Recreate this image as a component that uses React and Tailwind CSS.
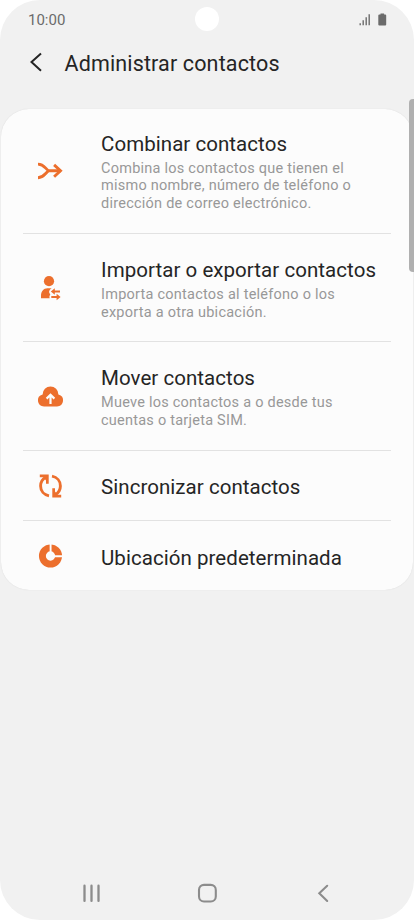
function MergeIcon() {
  return (
    <svg className="size-[30px]" viewBox="0 0 30 30" fill="none" stroke="currentColor" strokeWidth="2.900">
      <path d="M2 7.100C7.500 7.100 8.500 10.400 12.400 13.800C8.500 17.300 7.500 20.700 2 20.700M11.500 13.800H25" />
      <path d="M18.100 7.900 24.500 13.800 18.100 19.800" />
    </svg>
  )
}

function ImportExportIcon() {
  return (
    <svg className="size-[30px]" viewBox="0 0 30 30" fill="currentColor">
      <circle cx="13" cy="8.200" r="5.100" />
      <path d="M5 25.200v-2.500C5 18.200 7.500 15.400 11.500 15.200h4.200c-1.700 1-2.600 2.300-2.600 3.600 0 1 .7 2 1.200 2.700-1 1.200-1 2.500-.6 3.700z" />
      <path d="M14.800 18.500l4-3.200v2.200H24v2h-5.200v2.200zM24.600 24l-4-3.200V23h-5.300v2h5.300v2.200z" />
    </svg>
  )
}

function CloudUploadIcon() {
  return (
    <svg className="size-[30px]" viewBox="0 0 30 30">
      <path
        fill="currentColor"
        d="M8 24.600A6.200 6.200 0 0 1 6.600 12.400a7.900 7.900 0 0 1 15.800 0 6.200 6.200 0 0 1-1.400 12.200z"
      />
      <path d="M14.500 22V13M10.600 16.600l3.900-3.900 3.900 3.900" fill="none" stroke="#fcfcfc" strokeWidth="2.200" />
    </svg>
  )
}

function SyncIcon() {
  return (
    <svg className="size-[30px]" viewBox="0 0 30 30">
      <path
        d="M10 6C6.500 8 4.600 11 4.600 15c0 5 3.300 8.800 8.400 9.800M19 24c3.500-2 5.400-5 5.400-9 0-5-3.300-8.800-8.400-9.800"
        fill="none"
        stroke="currentColor"
        strokeWidth="2.900"
      />
      <path d="M3.800 3.500h8.900v9.200H10V9.500L7.500 6.300H3.800zM25.200 26.500h-8.900v-9.200H19v3.200l2.500 3.200h3.700z" fill="currentColor" />
    </svg>
  )
}

function StorageIcon() {
  return (
    <svg className="size-[30px]" viewBox="0 0 30 30">
      <circle cx="14.500" cy="15" r="8.100" fill="none" stroke="currentColor" strokeWidth="6.900" />
      <path d="M14.600 3v9M17 15.300h9.500" stroke="#fcfcfc" strokeWidth="1.900" />
    </svg>
  )
}

const items = [
  {
    title: 'Combinar contactos',
    lines: [
      'Combina los contactos que tienen el',
      'mismo nombre, número de teléfono o',
      'dirección de correo electrónico.',
    ],
    icon: MergeIcon,
    height: 'h-[125px]',
    offset: '',
  },
  {
    title: 'Importar o exportar contactos',
    lines: ['Importa contactos al teléfono o los', 'exporta a otra ubicación.'],
    icon: ImportExportIcon,
    height: 'h-[108px]',
    offset: 'pt-[2px]',
  },
  {
    title: 'Mover contactos',
    lines: ['Mueve los contactos a o desde tus', 'cuentas o tarjeta SIM.'],
    icon: CloudUploadIcon,
    height: 'h-[109px]',
    offset: 'pt-px',
  },
  { title: 'Sincronizar contactos', lines: [], icon: SyncIcon, height: 'h-[70px]', offset: 'pt-px' },
  { title: 'Ubicación predeterminada', lines: [], icon: StorageIcon, height: 'h-[69px]', offset: 'pt-[4px]' },
]

function StatusBar() {
  return (
    <div className="relative flex h-[38px] items-center justify-between pl-[28px] pr-[27px] text-[#6b6b6b]">
      <span className="pt-[2px] text-[15px] leading-[18px]">10:00</span>
      <div className="absolute left-[195px] top-[7px] size-[24px] rounded-full bg-white" />
      <div className="flex items-end gap-[7px]">
        <svg className="h-[13px] w-[12px]" viewBox="0 0 12 13" fill="currentColor">
          <path d="M.5 10.200h1.400v2H.5zM3.500 7.200h1.400v5H3.500zM6.500 4.200h1.400v8H6.500zM9.500 1.200h1.400v11H9.500z" />
        </svg>
        <svg className="h-[13px] w-[9px]" viewBox="0 0 9 13" fill="currentColor">
          <path d="M2.500.500h3.600v1h1.100a1 1 0 0 1 1 1v9a1 1 0 0 1-1 1H1.300a1 1 0 0 1-1-1v-9a1 1 0 0 1 1-1h1.200z" />
        </svg>
      </div>
    </div>
  )
}

function ContactItem({ item, last }) {
  const Icon = item.icon
  return (
    <li className={`relative flex items-center pl-[35px] ${item.height}`}>
      <span className="shrink-0 text-[#ec6f2d]">
        <Icon />
      </span>
      <div className={`ml-[35px] whitespace-nowrap ${item.offset}`}>
        <h2 className="text-[20.5px] leading-[26px] tracking-[0.05px] text-[#252525]">{item.title}</h2>
        {item.lines.length > 0 && (
          <div className="pt-[3px] text-[14.5px] leading-[17.5px] tracking-[0.24px] text-[#989898]">
            {item.lines.map((line) => (
              <p key={line}>{line}</p>
            ))}
          </div>
        )}
      </div>
      {!last && <div className="absolute bottom-0 left-[22px] right-[22px] h-px bg-[#e2e2e2]" />}
    </li>
  )
}

function NavBar() {
  return (
    <nav className="flex h-[54px] items-center justify-between px-[79px] text-[#8c8c8c]">
      <button aria-label="Recientes">
        <svg className="size-[24px]" viewBox="0 0 24 24" fill="none" stroke="currentColor" strokeWidth="2.300" strokeLinecap="round">
          <path d="M5.500 4.700v15.200M12.500 4.700v15.200M19.500 4.700v15.200" />
        </svg>
      </button>
      <button aria-label="Inicio">
        <svg className="size-[24px]" viewBox="0 0 24 24" fill="none" stroke="currentColor" strokeWidth="2.100">
          <rect x="4" y="3.900" width="16.800" height="16.600" rx="5" />
        </svg>
      </button>
      <button aria-label="Atrás">
        <svg className="size-[24px]" viewBox="0 0 24 24" fill="none" stroke="currentColor" strokeWidth="2.100" strokeLinecap="round">
          <path d="M16.200 4.800 8.300 12.200l7.900 7.700" />
        </svg>
      </button>
    </nav>
  )
}

function App() {
  return (
    <div className="h-[920px] w-[414px] bg-white font-['Roboto',sans-serif]">
      <div className="relative flex h-full flex-col overflow-hidden rounded-[40px] bg-[#f1f1f1]">
        <StatusBar />
        <header className="flex h-[71px] items-start pl-[24px] pt-[12px] text-[#252525]">
          <button aria-label="Volver">
            <svg className="size-[24px]" viewBox="0 0 24 24" fill="none" stroke="currentColor" strokeWidth="2">
              <path d="M17 3.500 7.500 12l9.500 8.700" />
            </svg>
          </button>
          <h1 className="ml-[16.5px] pt-px text-[21.5px] leading-[26px] tracking-[0.14px]">Administrar contactos</h1>
        </header>
        <ul className="mx-px rounded-[28px] bg-[#fcfcfc] shadow-[0_0_1px_#cfcfcf]">
          {items.map((item, i) => (
            <ContactItem key={item.title} item={item} last={i === items.length - 1} />
          ))}
        </ul>
        <div className="flex-1" />
        <NavBar />
        {/* scroll indicator */}
        <div className="absolute right-0 top-[99px] h-[173px] w-[5px] rounded-l-[4px] bg-[#b0b0b0]" />
      </div>
    </div>
  )
}

export default App
